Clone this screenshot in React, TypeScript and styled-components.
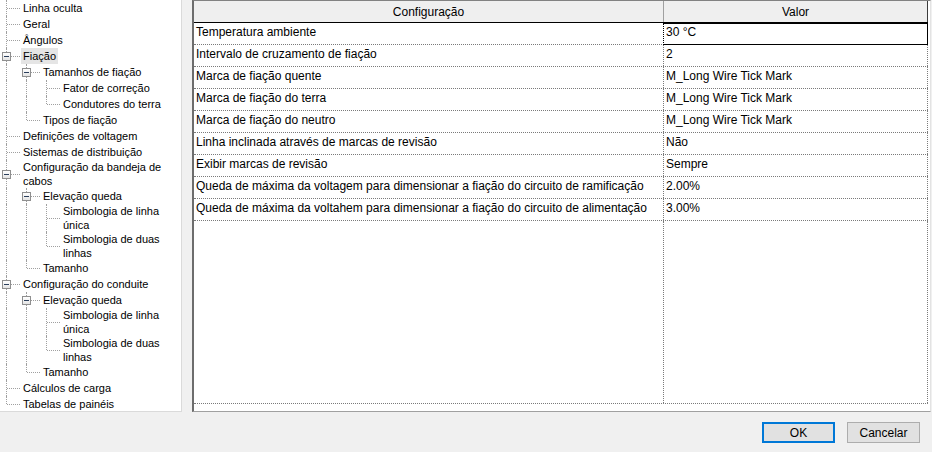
import React from "react";
import styled, { createGlobalStyle } from "styled-components";

const Global = createGlobalStyle`
  html, body { margin: 0; padding: 0; }
  body {
    background: #f0f0f0;
    font-family: "Liberation Sans", Arial, sans-serif;
    color: #000;
    width: 932px;
    height: 452px;
    overflow: hidden;
  }
`;

type TNode = { label: string; selected?: boolean; children?: TNode[] };

type FlatItem = {
  label: string;
  level: number;
  guides: boolean[];
  last: boolean;
  hasChildren: boolean;
  selected: boolean;
};

const elevacao = (): TNode => ({
  label: "Elevação queda",
  children: [
    { label: "Simbologia de linha única" },
    { label: "Simbologia de duas linhas" },
  ],
});

const tree: TNode[] = [
  { label: "Linha oculta" },
  { label: "Geral" },
  { label: "Ângulos" },
  {
    label: "Fiação",
    selected: true,
    children: [
      {
        label: "Tamanhos de fiação",
        children: [{ label: "Fator de correção" }, { label: "Condutores do terra" }],
      },
      { label: "Tipos de fiação" },
    ],
  },
  { label: "Definições de voltagem" },
  { label: "Sistemas de distribuição" },
  {
    label: "Configuração da bandeja de cabos",
    children: [elevacao(), { label: "Tamanho" }],
  },
  {
    label: "Configuração do conduite",
    children: [elevacao(), { label: "Tamanho" }],
  },
  { label: "Cálculos de carga" },
  { label: "Tabelas de painéis" },
];

function flatten(nodes: TNode[], level: number, guides: boolean[]): FlatItem[] {
  const out: FlatItem[] = [];
  nodes.forEach((n, i) => {
    const last = i === nodes.length - 1;
    out.push({
      label: n.label,
      level,
      guides,
      last,
      hasChildren: !!n.children && n.children.length > 0,
      selected: !!n.selected,
    });
    if (n.children) out.push(...flatten(n.children, level + 1, [...guides, !last]));
  });
  return out;
}

const rows: [string, string][] = [
  ["Temperatura ambiente", "30 °C"],
  ["Intervalo de cruzamento de fiação", "2"],
  ["Marca de fiação quente", "M_Long Wire Tick Mark"],
  ["Marca de fiação do terra", "M_Long Wire Tick Mark"],
  ["Marca de fiação do neutro", "M_Long Wire Tick Mark"],
  ["Linha inclinada através de marcas de revisão", "Não"],
  ["Exibir marcas de revisão", "Sempre"],
  [
    "Queda de máxima da voltagem para dimensionar a fiação do circuito de ramificação",
    "2.00%",
  ],
  [
    "Queda de máxima da voltahem para dimensionar a fiação do circuito de alimentação",
    "3.00%",
  ],
];

/* ---------- layout ---------- */

const Window = styled.div`
  width: 932px;
  height: 452px;
  display: flex;
  flex-direction: column;
  background: #f0f0f0;
`;

const Main = styled.div`
  height: 412px;
  display: flex;
  gap: 10px;
`;

const Footer = styled.div`
  flex: 1;
  display: flex;
  justify-content: flex-end;
  align-items: flex-start;
  gap: 12px;
  padding: 10px 12px 0 0;
`;

const Button = styled.button<{ $default?: boolean }>`
  box-sizing: border-box;
  width: 73px;
  height: 21px;
  margin: 0;
  padding: 0;
  background: #e1e1e1;
  border: ${(p) => (p.$default ? "2px solid #0078d7" : "1px solid #adadad")};
  font-family: "Liberation Sans", Arial, sans-serif;
  font-size: 12px;
  color: #000;
  line-height: 1;
`;

/* ---------- tree ---------- */

const TreePanel = styled.div`
  box-sizing: border-box;
  width: 182px;
  height: 412px;
  background: #fff;
  border-right: 1px solid #dadada;
  border-bottom: 1px solid #dadada;
  overflow: hidden;
  font-size: 11px;
`;

const TreeRow = styled.div`
  display: flex;
  align-items: center;
  min-height: 16px;
  padding-right: 4px;
`;

const Guide = styled.div<{ $on: boolean }>`
  box-sizing: border-box;
  flex: 0 0 14px;
  margin-left: 6px;
  align-self: stretch;
  border-left: 1px dotted ${(p) => (p.$on ? "#a0a0a0" : "transparent")};
`;

const Connector = styled.div<{ $last: boolean }>`
  position: relative;
  flex: 0 0 20px;
  align-self: stretch;

  &::before {
    content: "";
    position: absolute;
    left: 6px;
    top: 0;
    height: ${(p) => (p.$last ? "50%" : "100%")};
    border-left: 1px dotted #a0a0a0;
  }
  &::after {
    content: "";
    position: absolute;
    left: 7px;
    right: 0;
    top: 50%;
    border-top: 1px dotted #a0a0a0;
  }
`;

const Expander = styled.span`
  position: absolute;
  z-index: 1;
  left: 2px;
  top: calc(50% - 4px);
  box-sizing: border-box;
  width: 9px;
  height: 9px;
  border: 1px solid #8f8f8f;
  background: linear-gradient(#ffffff, #e4e4e4);

  &::after {
    content: "";
    position: absolute;
    left: 1px;
    top: 3px;
    width: 5px;
    height: 1px;
    background: #2b3f5c;
  }
`;

const Label = styled.span<{ $selected: boolean }>`
  flex: 0 1 auto;
  margin-left: 1px;
  padding: ${(p) => (p.$selected ? "1px 2px" : "0 2px")};
  line-height: 14px;
  white-space: normal;
  background: ${(p) => (p.$selected ? "#e5e5e5" : "transparent")};
`;

function Tree() {
  const items = flatten(tree, 0, []);
  return (
    <TreePanel>
      {items.map((it, idx) => (
        <TreeRow key={idx}>
          {it.guides.map((g, gi) => (
            <Guide key={gi} $on={g} />
          ))}
          <Connector $last={it.last}>{it.hasChildren && <Expander />}</Connector>
          <Label $selected={it.selected}>{it.label}</Label>
        </TreeRow>
      ))}
    </TreePanel>
  );
}

/* ---------- grid ---------- */

const GridFrame = styled.div`
  box-sizing: border-box;
  width: 739px;
  height: 412px;
  background: #fff;
  border-top: 1px solid #828282;
  border-left: 2px solid #6d6d6d;
  border-right: 1px solid #e3e3e3;
  border-bottom: 1px solid #a0a0a0;
  padding: 0 2px 7px 0;
  display: flex;
  flex-direction: column;
  font-size: 12px;
`;

const GridInner = styled.div`
  flex: 1;
  display: flex;
  flex-direction: column;
  border-bottom: 1px dotted #7a7a7a;
`;

const HeaderRow = styled.div`
  display: grid;
  grid-template-columns: 469px 1fr;
  height: 22px;
  box-sizing: border-box;
  background: #efefef;
  border-bottom: 1px solid #000;
`;

const HeaderCell = styled.div<{ $value?: boolean }>`
  box-sizing: border-box;
  display: flex;
  align-items: center;
  justify-content: center;
  border-left: ${(p) => (p.$value ? "1px solid #a0a0a0" : "none")};
  border-right: ${(p) => (p.$value ? "1px solid #3c3c3c" : "none")};
`;

const Row = styled.div`
  display: grid;
  grid-template-columns: 469px 1fr;
  height: 22px;
  box-sizing: border-box;
  border-bottom: 1px dotted #7a7a7a;
`;

const Cell = styled.div<{ $value?: boolean; $selected?: boolean }>`
  box-sizing: border-box;
  display: flex;
  align-items: center;
  padding: 0 0 4px 2px;
  white-space: nowrap;
  overflow: hidden;
  ${(p) =>
    p.$value
      ? p.$selected
        ? `border: 1px solid #000; border-left: 1px dotted #000; margin-bottom: -1px; padding-bottom: 5px;`
        : `border-left: 1px dotted #7a7a7a; border-right: 1px dotted #7a7a7a;`
      : ""}
`;

const Filler = styled.div`
  flex: 1;
  display: grid;
  grid-template-columns: 469px 1fr;
`;

const FillerCol = styled.div<{ $value?: boolean }>`
  box-sizing: border-box;
  ${(p) =>
    p.$value
      ? `border-left: 1px dotted #7a7a7a; border-right: 1px dotted #7a7a7a;`
      : ""}
`;

function Grid() {
  return (
    <GridFrame>
      <GridInner>
        <HeaderRow>
          <HeaderCell>Configuração</HeaderCell>
          <HeaderCell $value>Valor</HeaderCell>
        </HeaderRow>
        {rows.map(([k, v], i) => (
          <Row key={i}>
            <Cell>{k}</Cell>
            <Cell $value $selected={i === 0}>
              {v}
            </Cell>
          </Row>
        ))}
        <Filler>
          <FillerCol />
          <FillerCol $value />
        </Filler>
      </GridInner>
    </GridFrame>
  );
}

export default function App() {
  return (
    <>
      <Global />
      <Window>
        <Main>
          <Tree />
          <Grid />
        </Main>
        <Footer>
          <Button $default>OK</Button>
          <Button>Cancelar</Button>
        </Footer>
      </Window>
    </>
  );
}
